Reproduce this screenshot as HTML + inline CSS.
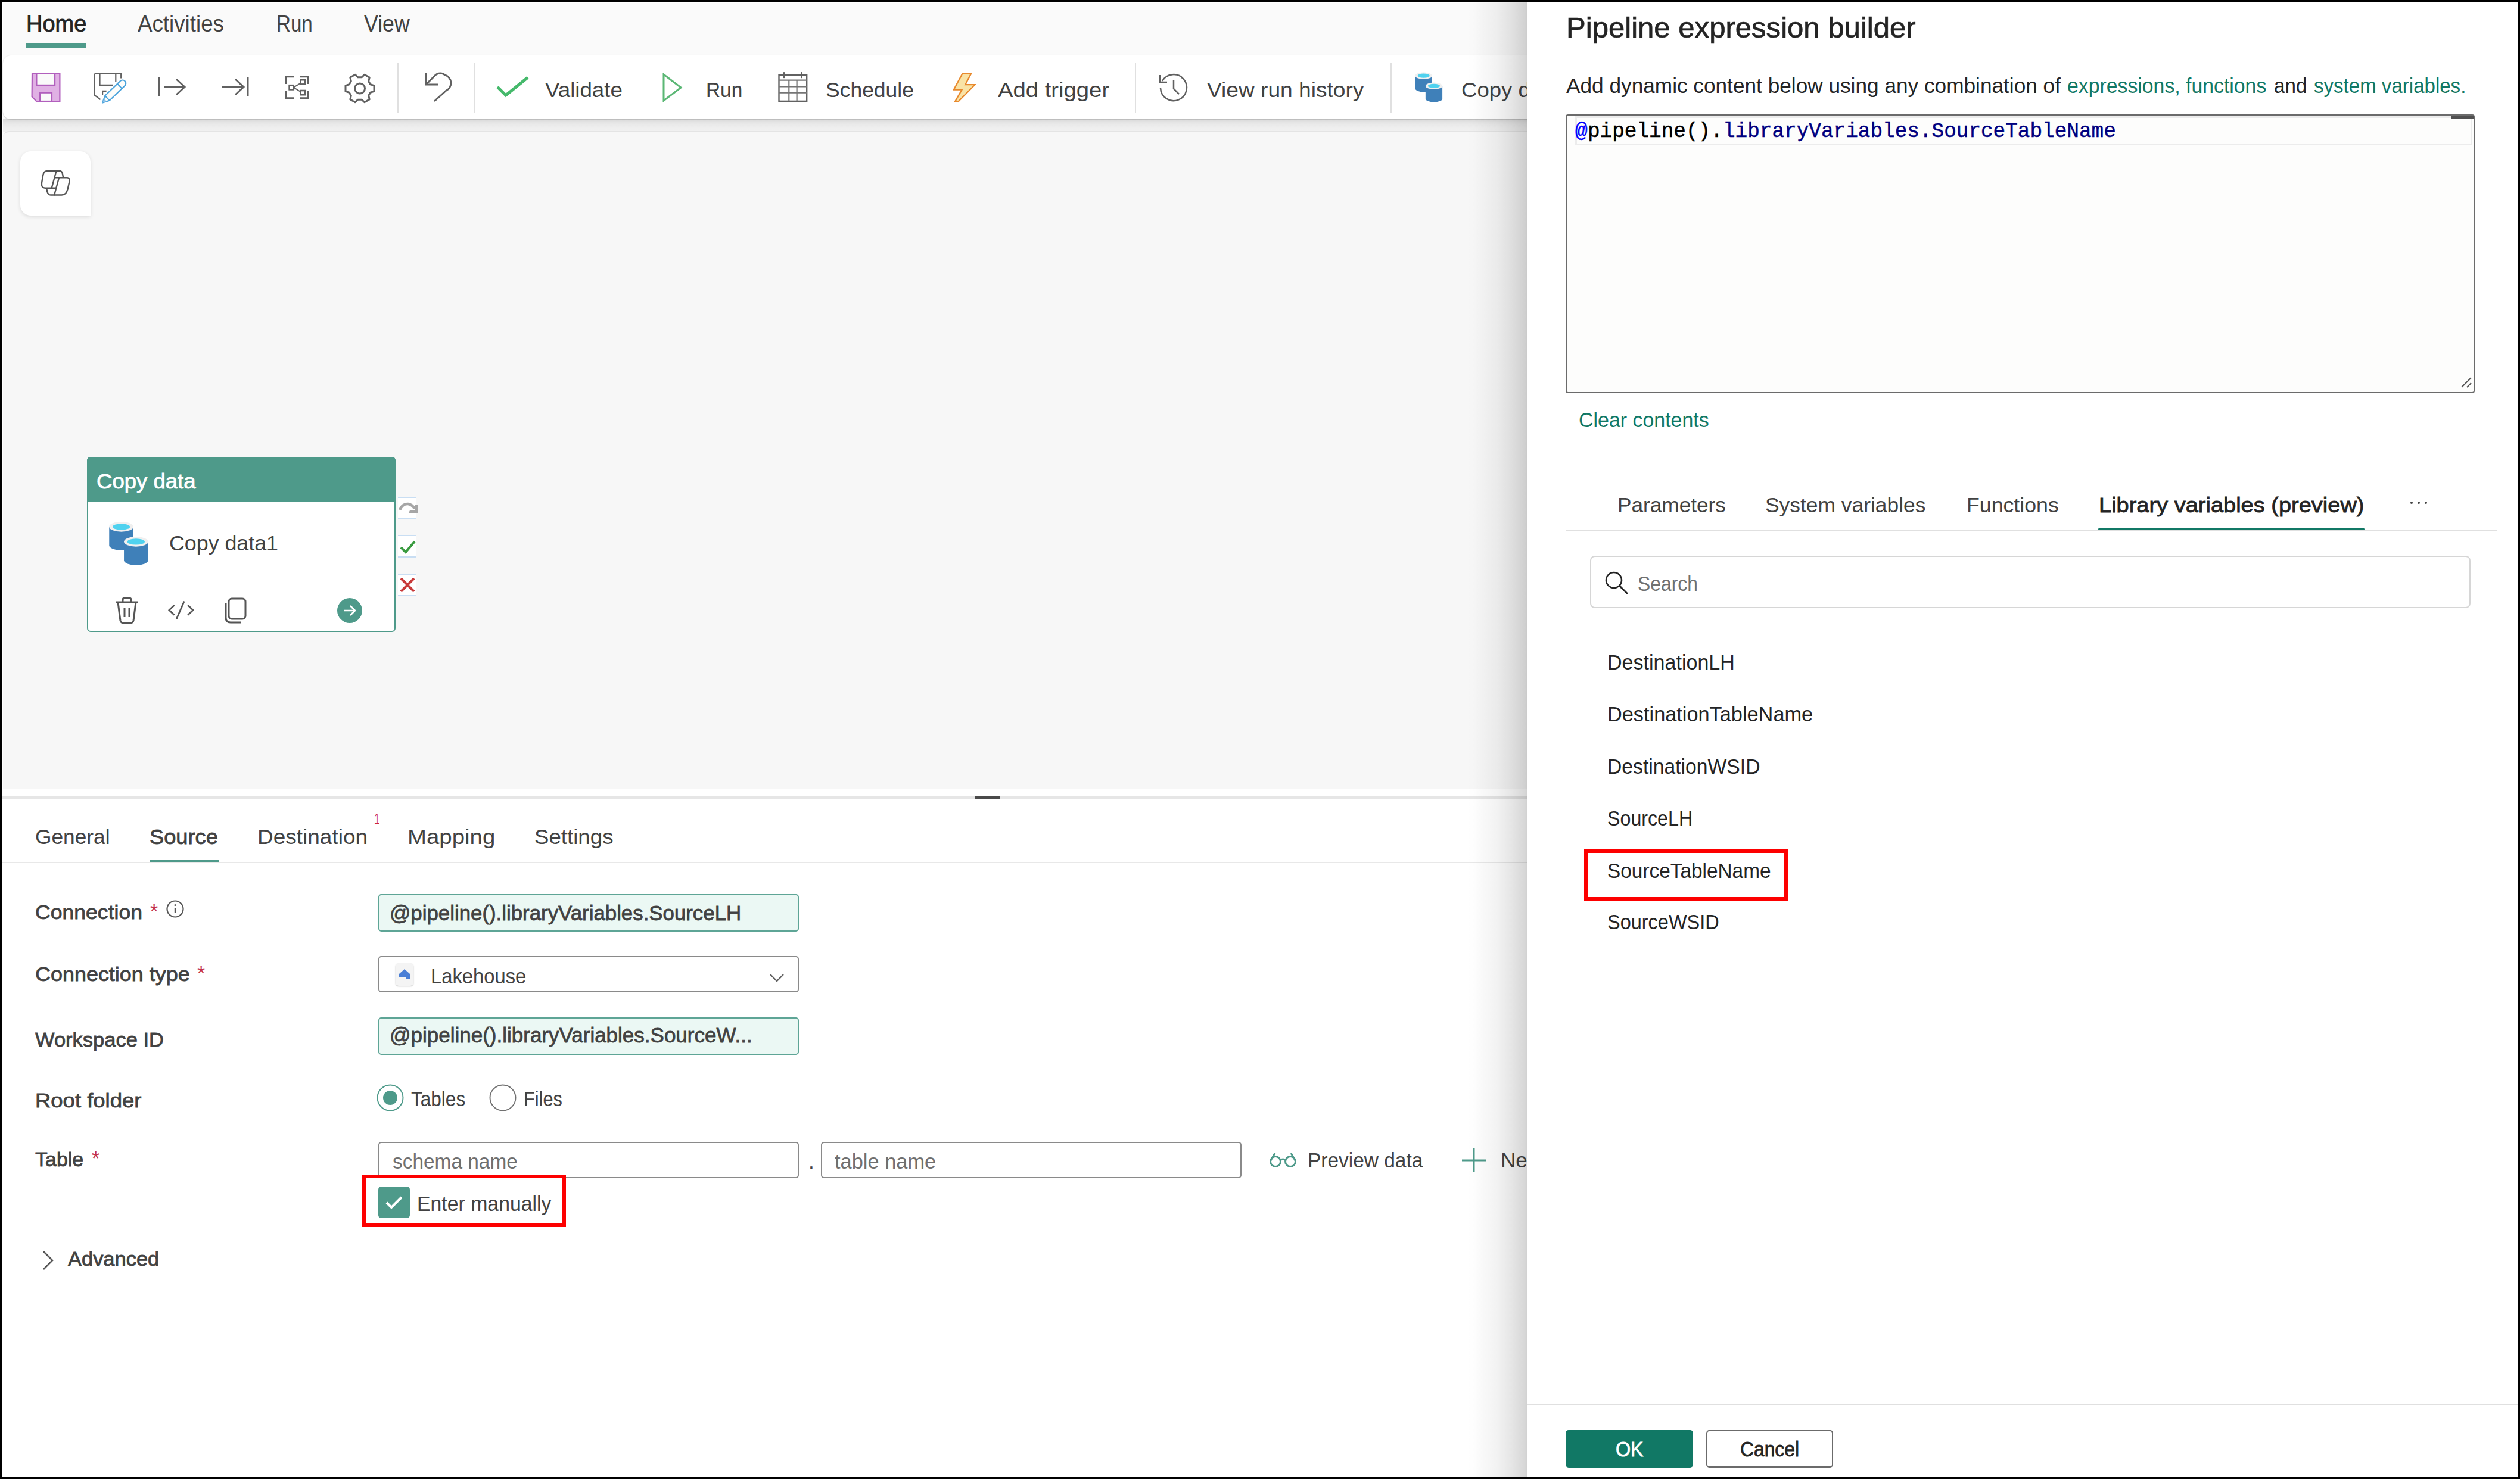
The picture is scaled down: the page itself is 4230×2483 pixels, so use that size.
<!DOCTYPE html>
<html><head><meta charset="utf-8"><title>Pipeline expression builder</title>
<style>
html,body{margin:0;padding:0;}
body{width:4230px;height:2483px;background:#000;position:relative;overflow:hidden;font-family:"Liberation Sans",sans-serif;}
.t{position:absolute;white-space:nowrap;}
.r{position:absolute;}
</style></head><body>
<div class="r" style="left:4px;top:4px;width:2560px;height:260px;background:#fafafa;"></div>
<div class="r" style="left:4px;top:4px;width:2560px;height:1px;background:#ffffff;"></div>
<div class="r" style="left:4px;top:4px;width:1px;height:2475px;background:#ffffff;"></div>
<div class="t" style="left:44.0px;top:21.4px;font-size:38px;line-height:38px;font-weight:400;color:#242424;font-family:'Liberation Sans', sans-serif;-webkit-text-stroke:0.8px #242424;">Home</div>
<div class="r" style="left:44px;top:72px;width:101px;height:8px;background:#4e9a8a;"></div>
<div class="t" style="left:231.0px;top:21.4px;font-size:38px;line-height:38px;font-weight:400;color:#424242;font-family:'Liberation Sans', sans-serif;transform:scaleX(0.9667);transform-origin:0 0;">Activities</div>
<div class="t" style="left:464.0px;top:21.4px;font-size:38px;line-height:38px;font-weight:400;color:#424242;font-family:'Liberation Sans', sans-serif;transform:scaleX(0.8714);transform-origin:0 0;">Run</div>
<div class="t" style="left:611.0px;top:21.4px;font-size:38px;line-height:38px;font-weight:400;color:#424242;font-family:'Liberation Sans', sans-serif;transform:scaleX(0.9390);transform-origin:0 0;">View</div>
<div class="r" style="left:5px;top:200px;width:2600px;height:21px;background:linear-gradient(#d8d8d8 0%, #e3e3e3 20%, #eaeaea 45%, #efefef 75%, #f0f0f0 100%);"></div>
<div class="r" style="left:5px;top:93px;width:2600px;height:107px;background:#ffffff;border-radius:13px;box-shadow:0 1px 2px rgba(0,0,0,0.14),0 0 2px rgba(0,0,0,0.10);"></div>
<div class="r" style="left:5px;top:220px;width:2600px;height:1105px;background:#f7f7f7;border-top-left-radius:10px;border-top:2px solid #e4e4e4;box-sizing:border-box;"></div>
<div class="r" style="left:667px;top:105px;width:2px;height:84px;background:#e0e0e0;"></div>
<div class="r" style="left:796px;top:105px;width:2px;height:84px;background:#e0e0e0;"></div>
<div class="r" style="left:1905px;top:105px;width:2px;height:84px;background:#e0e0e0;"></div>
<div class="r" style="left:2334px;top:105px;width:2px;height:84px;background:#e0e0e0;"></div>
<svg class="r" style="left:50px;top:120px;" width="54" height="52" viewBox="0 0 54 52"><path d="M4 3.6 H50.4 V50 H11 L3.6 42.3 Z" fill="#e0b1e4" stroke="#b15fbd" stroke-width="2.2" stroke-linejoin="miter"/><rect x="11.4" y="3.6" width="30.7" height="19.3" fill="#fafafa" stroke="#b15fbd" stroke-width="2.2"/><rect x="17" y="35.7" width="20" height="14.3" fill="#fafafa" stroke="#b15fbd" stroke-width="2.2"/></svg>
<svg class="r" style="left:156px;top:120px;" width="58" height="58" viewBox="0 0 58 58"><path d="M2.9 3.6 H47.2 V11.4 M2.9 3.6 V40 L12.6 47.1 M11.5 3.6 V22.9 H33.3 M38.3 3.6 V17 M16.1 40 V32.9 H22.6" fill="none" stroke="#616161" stroke-width="2.2"/><path d="M16.1 52.5 L20.2 40.8 L45.9 16 A5.5 5.5 0 0 1 53.5 24 L27.8 48.8 Z" fill="#fdfdfa" stroke="#4aa3dc" stroke-width="2.2" stroke-linejoin="round"/><path d="M20.2 40.8 L27.8 48.8 M41.1 20.7 L48.7 28.7" stroke="#4aa3dc" stroke-width="2"/><path d="M16.1 52.5 L18.5 45.5 L23 50 Z" fill="#8fc4ea"/></svg>
<svg class="r" style="left:262px;top:128px;" width="52" height="36" viewBox="0 0 52 36"><path d="M5 2 V34 M13 18 H48 M34 5 L48 18 L34 31" fill="none" stroke="#616161" stroke-width="3"/></svg>
<svg class="r" style="left:369px;top:128px;" width="52" height="36" viewBox="0 0 52 36"><path d="M3 18 H40 M26 5 L40 18 L26 31 M47 2 V34" fill="none" stroke="#616161" stroke-width="3"/></svg>
<svg class="r" style="left:476px;top:124px;" width="46" height="46" viewBox="0 0 46 46"><g fill="none" stroke="#616161" stroke-width="2.6"><path d="M3.7 17.1 V5 H17.7 M27.8 5 H41.1 V17.1 M3.7 27.9 V40.6 H17.7 M27.8 40.6 H41.1 V27.9"/><rect x="9.6" y="19.2" width="7.2" height="7.2"/><rect x="28.6" y="10.2" width="7.2" height="7.2"/><rect x="28.6" y="28" width="7.2" height="7.2"/></g><path d="M16.8 22.8 L28.6 15.5 M16.8 22.8 L28.6 30" stroke="#616161" stroke-width="2"/></svg>

<svg class="r" style="left:575px;top:120px;" width="58" height="58" viewBox="0 0 58 58"><path d="M46.8 21.8 L53.0 23.6 L53.0 33.4 L46.8 35.2 L43.7 40.6 L45.2 46.9 L36.8 51.7 L32.1 47.2 L25.9 47.2 L21.2 51.7 L12.8 46.9 L14.3 40.6 L11.2 35.2 L5.0 33.4 L5.0 23.6 L11.2 21.8 L14.3 16.4 L12.8 10.1 L21.2 5.3 L25.9 9.8 L32.1 9.8 L36.8 5.3 L45.2 10.1 L43.7 16.4 Z" fill="none" stroke="#616161" stroke-width="3" stroke-linejoin="round"/><circle cx="29" cy="28.5" r="8.5" fill="none" stroke="#616161" stroke-width="3"/></svg>
<svg class="r" style="left:709px;top:120px;" width="50" height="52" viewBox="0 0 50 52"><path d="M6 2 V22 H26 M6 22 L22 6 A12 12 0 0 1 38 6 A14 14 0 0 1 40 32 L20 50" fill="none" stroke="#616161" stroke-width="3"/></svg>
<svg class="r" style="left:832px;top:127px;" width="58" height="42" viewBox="0 0 58 42"><path d="M3 19 L17 33 L54 3" fill="none" stroke="#45b96b" stroke-width="5"/></svg>
<div class="t" style="left:915.0px;top:132.8px;font-size:35px;line-height:35px;font-weight:400;color:#424242;font-family:'Liberation Sans', sans-serif;transform:scaleX(1.0484);transform-origin:0 0;">Validate</div>
<svg class="r" style="left:1111px;top:122px;" width="36" height="50" viewBox="0 0 36 50"><path d="M3 3 L32 25 L3 47 Z" fill="none" stroke="#5bb775" stroke-width="3"/></svg>
<div class="t" style="left:1185.0px;top:132.8px;font-size:35px;line-height:35px;font-weight:400;color:#424242;font-family:'Liberation Sans', sans-serif;transform:scaleX(0.9531);transform-origin:0 0;">Run</div>
<svg class="r" style="left:1304px;top:121px;" width="54" height="52" viewBox="0 0 54 52"><rect x="3.5" y="5.1" width="46.7" height="43.8" fill="none" stroke="#616161" stroke-width="2.4"/><path d="M3.5 13.6 H50.2 M3.5 24.3 H50.2 M3.5 34.7 H50.2 M20.3 13.6 V48.9 M33.6 13.6 V48.9" stroke="#757575" stroke-width="2.2"/><path d="M12 1.3 V8.9 M41.6 1.3 V8.9" stroke="#616161" stroke-width="2.6" stroke-linecap="round"/></svg>
<div class="t" style="left:1386.0px;top:132.8px;font-size:35px;line-height:35px;font-weight:400;color:#424242;font-family:'Liberation Sans', sans-serif;transform:scaleX(1.0137);transform-origin:0 0;">Schedule</div>
<svg class="r" style="left:1597px;top:120px;" width="42" height="52" viewBox="0 0 42 52"><path d="M18.6 3.3 H33.2 L23.3 22.2 H39.4 L11.9 50.1 H6.3 L17.6 30.7 H3.9 Z" fill="#f9e3a6" stroke="#e88a2e" stroke-width="2.3" stroke-linejoin="miter"/></svg>
<div class="t" style="left:1675.0px;top:132.8px;font-size:35px;line-height:35px;font-weight:400;color:#424242;font-family:'Liberation Sans', sans-serif;transform:scaleX(1.0930);transform-origin:0 0;">Add trigger</div>
<svg class="r" style="left:1943px;top:121px;" width="54" height="54" viewBox="0 0 54 54"><path d="M8 15 A22 22 0 1 1 5 27" fill="none" stroke="#616161" stroke-width="2.5"/><path d="M4 5 V17 H16" fill="none" stroke="#616161" stroke-width="2.5"/><path d="M27 14 V28 L36 37" fill="none" stroke="#616161" stroke-width="2.5"/></svg>
<div class="t" style="left:2026.0px;top:132.8px;font-size:35px;line-height:35px;font-weight:400;color:#424242;font-family:'Liberation Sans', sans-serif;transform:scaleX(1.0602);transform-origin:0 0;">View run history</div>
<svg class="r" style="left:2374.4px;top:119.6px" width="48.7" height="52.9" viewBox="0 0 62 74" preserveAspectRatio="none"><ellipse cx="20" cy="10" rx="18" ry="8" fill="#e8f3fa"/><path d="M2 10 V40 A18 8 0 0 0 38 40 V10 Z" fill="#3f80b9"/><ellipse cx="20" cy="10" rx="18" ry="8" fill="#f0f0f0"/><ellipse cx="20" cy="10" rx="13" ry="5" fill="#50d2ef"/><path d="M24 34 V64 A18 8 0 0 0 60 64 V34 Z" fill="#3f80b9"/><ellipse cx="42" cy="34" rx="18" ry="8" fill="#f0f0f0"/><ellipse cx="42" cy="34" rx="13" ry="5" fill="#50d2ef"/></svg>
<div class="t" style="left:2453.0px;top:132.8px;font-size:35px;line-height:35px;font-weight:400;color:#424242;font-family:'Liberation Sans', sans-serif;transform:scaleX(1.045);transform-origin:0 0;">Copy data</div>
<div class="r" style="left:34px;top:254px;width:118px;height:108px;background:#ffffff;border-radius:18px 18px 0 18px;box-shadow:0 2px 6px rgba(0,0,0,0.12);"></div>
<svg class="r" style="left:68px;top:285px;" width="51" height="45" viewBox="0 0 51 45"><g transform="translate(1,1)" fill="none" stroke="#555" stroke-width="2.4" stroke-linejoin="round" stroke-linecap="round"><path d="M10.5 1 H31 Q35 1 36 6 L37 11.8"/><path d="M10.5 1 Q5 1 3.5 7 L1 21 Q0 29.5 6.5 29.8 H25"/><path d="M25.5 1 L17.8 29.5"/><path d="M23.3 12.2 H44 Q48.5 12.8 47.5 19 L44.5 32 Q42 41.5 34.5 41.5 H16 Q12 41.5 10.5 36.5 L9 30.3"/><path d="M29.8 13.3 L22.2 41.3"/></g></svg>
<div class="r" style="left:146px;top:767px;width:518px;height:294px;background:#ffffff;border:2.5px solid #4e9a8a;border-radius:6px;box-sizing:border-box;"></div>
<div class="r" style="left:146px;top:767px;width:518px;height:75px;background:#4e9a8a;border-radius:6px 6px 0 0;"></div>
<div class="t" style="left:162.0px;top:790.4px;font-size:35px;line-height:35px;font-weight:400;color:#ffffff;font-family:'Liberation Sans', sans-serif;transform:scaleX(1.0437);transform-origin:0 0;-webkit-text-stroke:0.8px #ffffff;">Copy data</div>
<svg class="r" style="left:181.3px;top:873.9px" width="69.9" height="77" viewBox="0 0 62 74" preserveAspectRatio="none"><ellipse cx="20" cy="10" rx="18" ry="8" fill="#e8f3fa"/><path d="M2 10 V40 A18 8 0 0 0 38 40 V10 Z" fill="#3f80b9"/><ellipse cx="20" cy="10" rx="18" ry="8" fill="#f0f0f0"/><ellipse cx="20" cy="10" rx="13" ry="5" fill="#50d2ef"/><path d="M24 34 V64 A18 8 0 0 0 60 64 V34 Z" fill="#3f80b9"/><ellipse cx="42" cy="34" rx="18" ry="8" fill="#f0f0f0"/><ellipse cx="42" cy="34" rx="13" ry="5" fill="#50d2ef"/></svg>
<div class="t" style="left:284.0px;top:894.2px;font-size:35px;line-height:35px;font-weight:400;color:#424242;font-family:'Liberation Sans', sans-serif;transform:scaleX(1.0223);transform-origin:0 0;">Copy data1</div>
<svg class="r" style="left:190px;top:1002px;" width="46" height="46" viewBox="0 0 46 46"><path d="M4 9 H42 M16 9 V5 Q16 2 19 2 H27 Q30 2 30 5 V9 M8 9 L12 40 Q13 44 17 44 H29 Q33 44 34 40 L38 9 M19 18 V34 M27 18 V34" fill="none" stroke="#555" stroke-width="3"/></svg>
<svg class="r" style="left:280px;top:1006px;" width="48" height="40" viewBox="0 0 48 40"><path d="M12.6 10 L3.9 18.2 L12.6 26.5 M35.3 10 L44 18.2 L35.3 26.5 M29.2 3.5 L16.1 33.5" fill="none" stroke="#555" stroke-width="2.7"/></svg>
<svg class="r" style="left:374px;top:1003px;" width="42" height="44" viewBox="0 0 42 44"><rect x="10" y="2" width="28" height="34" rx="5" fill="none" stroke="#555" stroke-width="3"/><path d="M5 9 V34 Q5 42 13 42 H30" fill="none" stroke="#555" stroke-width="3"/></svg>
<svg class="r" style="left:565px;top:1003px;" width="44" height="44" viewBox="0 0 44 44"><circle cx="22" cy="22" r="21" fill="#4e9a8a"/><path d="M12 22 H31 M23 14 L31 22 L23 30" fill="none" stroke="#fff" stroke-width="2.6"/></svg>
<div class="r" style="left:668px;top:834px;width:31px;height:38px;background:#fff;border-top:2px solid #c9def3;border-bottom:2px solid #c9def3;box-sizing:border-box;"></div>
<svg class="r" style="left:668px;top:840px;" width="33" height="28" viewBox="0 0 33 28"><path d="M3 16 Q8 5 17 6 Q24 7 28 14" fill="none" stroke="#a6a6a6" stroke-width="4.5"/><path d="M33 7 V21 H18 L20 17 H29 V7 Z" fill="#a6a6a6"/></svg>
<div class="r" style="left:668px;top:898px;width:31px;height:38px;background:#fff;border-top:2px solid #c9def3;border-bottom:2px solid #c9def3;box-sizing:border-box;"></div>
<svg class="r" style="left:670px;top:905px;" width="28" height="26" viewBox="0 0 28 26"><path d="M3 14 L11 22 L26 4" fill="none" stroke="#3a9b40" stroke-width="4"/></svg>
<div class="r" style="left:668px;top:963px;width:31px;height:38px;background:#fff;border-top:2px solid #c9def3;border-bottom:2px solid #c9def3;box-sizing:border-box;"></div>
<svg class="r" style="left:670px;top:968px;" width="28" height="28" viewBox="0 0 28 28"><path d="M3 3 L25 25 M25 3 L3 25" fill="none" stroke="#c83a3a" stroke-width="4"/></svg>
<div class="r" style="left:4px;top:1325px;width:2560px;height:1154px;background:#ffffff;"></div>
<div class="r" style="left:4px;top:1336px;width:2560px;height:6px;background:#e6e6e6;"></div>
<div class="r" style="left:1636px;top:1336px;width:43px;height:6px;background:#4a4a4a;border-radius:1px;"></div>
<div class="t" style="left:59.0px;top:1387.4px;font-size:35px;line-height:35px;font-weight:400;color:#424242;font-family:'Liberation Sans', sans-serif;transform:scaleX(1.0080);transform-origin:0 0;">General</div>
<div class="t" style="left:251.0px;top:1386.9px;font-size:35px;line-height:35px;font-weight:400;color:#424242;font-family:'Liberation Sans', sans-serif;transform:scaleX(1.0360);transform-origin:0 0;-webkit-text-stroke:0.8px #424242;">Source</div>
<div class="r" style="left:251px;top:1443px;width:116px;height:6px;background:#4e9a8a;"></div>
<div class="t" style="left:432.0px;top:1387.4px;font-size:35px;line-height:35px;font-weight:400;color:#424242;font-family:'Liberation Sans', sans-serif;transform:scaleX(1.0571);transform-origin:0 0;">Destination</div>
<div class="t" style="left:628.0px;top:1362.2px;font-size:26px;line-height:26px;font-weight:400;color:#d0273e;font-family:'Liberation Sans', sans-serif;transform:scaleX(0.6429);transform-origin:0 0;">1</div>
<div class="t" style="left:684.0px;top:1387.4px;font-size:35px;line-height:35px;font-weight:400;color:#424242;font-family:'Liberation Sans', sans-serif;transform:scaleX(1.0970);transform-origin:0 0;">Mapping</div>
<div class="t" style="left:897.0px;top:1387.4px;font-size:35px;line-height:35px;font-weight:400;color:#424242;font-family:'Liberation Sans', sans-serif;transform:scaleX(1.0476);transform-origin:0 0;">Settings</div>
<div class="r" style="left:4px;top:1447px;width:2560px;height:2px;background:#e8e8e8;"></div>
<div class="t" style="left:59.0px;top:1514.2px;font-size:34px;line-height:34px;font-weight:400;color:#424242;font-family:'Liberation Sans', sans-serif;transform:scaleX(1.0465);transform-origin:0 0;-webkit-text-stroke:0.8px #424242;">Connection</div>
<div class="t" style="left:252.0px;top:1512.2px;font-size:34px;line-height:34px;font-weight:400;color:#c4314b;font-family:'Liberation Sans', sans-serif;">*</div>
<svg class="r" style="left:278px;top:1510px;" width="32" height="32" viewBox="0 0 32 32"><circle cx="16" cy="16" r="13.5" fill="none" stroke="#555" stroke-width="2.2"/><path d="M16 14 V23" stroke="#555" stroke-width="2.4"/><circle cx="16" cy="9.5" r="1.6" fill="#555"/></svg>
<div class="t" style="left:59.0px;top:1618.2px;font-size:34px;line-height:34px;font-weight:400;color:#424242;font-family:'Liberation Sans', sans-serif;transform:scaleX(1.0569);transform-origin:0 0;-webkit-text-stroke:0.8px #424242;">Connection type</div>
<div class="t" style="left:331.0px;top:1616.2px;font-size:34px;line-height:34px;font-weight:400;color:#c4314b;font-family:'Liberation Sans', sans-serif;">*</div>
<div class="t" style="left:59.0px;top:1727.9px;font-size:34px;line-height:34px;font-weight:400;color:#424242;font-family:'Liberation Sans', sans-serif;transform:scaleX(1.0141);transform-origin:0 0;-webkit-text-stroke:0.8px #424242;">Workspace ID</div>
<div class="t" style="left:59.0px;top:1829.9px;font-size:34px;line-height:34px;font-weight:400;color:#424242;font-family:'Liberation Sans', sans-serif;transform:scaleX(1.0723);transform-origin:0 0;-webkit-text-stroke:0.8px #424242;">Root folder</div>
<div class="t" style="left:59.0px;top:1929.2px;font-size:34px;line-height:34px;font-weight:400;color:#424242;font-family:'Liberation Sans', sans-serif;-webkit-text-stroke:0.8px #424242;">Table</div>
<div class="t" style="left:154.0px;top:1927.2px;font-size:34px;line-height:34px;font-weight:400;color:#c4314b;font-family:'Liberation Sans', sans-serif;">*</div>
<div class="r" style="left:635px;top:1501px;width:706px;height:63px;background:#ebf8f4;border:2px solid #5ea596;border-radius:5px;box-sizing:border-box;"></div>
<div class="t" style="left:654.0px;top:1515.4px;font-size:35px;line-height:35px;font-weight:400;color:#424242;font-family:'Liberation Sans', sans-serif;transform:scaleX(0.9949);transform-origin:0 0;-webkit-text-stroke:0.8px #424242;">@pipeline().libraryVariables.SourceLH</div>
<div class="r" style="left:635px;top:1605px;width:706px;height:61px;background:#fff;border:2px solid #8a8a8a;border-radius:5px;box-sizing:border-box;"></div>
<div class="r" style="left:664px;top:1617px;width:30px;height:38px;background:#f4f4f4;border-radius:5px;box-shadow:0 1px 2px rgba(0,0,0,0.25);"></div>
<svg class="r" style="left:668px;top:1624px;" width="22" height="24" viewBox="0 0 22 24"><path d="M2 11 L11 3 L20 11 V20 H13 V17 H2 Z" fill="#4a7fd6"/></svg>
<div class="t" style="left:723.0px;top:1620.9px;font-size:35px;line-height:35px;font-weight:400;color:#424242;font-family:'Liberation Sans', sans-serif;transform:scaleX(0.9357);transform-origin:0 0;">Lakehouse</div>
<svg class="r" style="left:1290px;top:1633px;" width="28" height="18" viewBox="0 0 28 18"><path d="M3 3 L14 14 L25 3" fill="none" stroke="#616161" stroke-width="2.4"/></svg>
<div class="r" style="left:635px;top:1708px;width:706px;height:63px;background:#ebf8f4;border:2px solid #5ea596;border-radius:5px;box-sizing:border-box;"></div>
<div class="t" style="left:654.0px;top:1720.4px;font-size:35px;line-height:35px;font-weight:400;color:#424242;font-family:'Liberation Sans', sans-serif;-webkit-text-stroke:0.8px #424242;">@pipeline().libraryVariables.SourceW...</div>
<svg class="r" style="left:631px;top:1819px;" width="48" height="48" viewBox="0 0 48 48"><circle cx="24" cy="24" r="21.5" fill="#fff" stroke="#4e9a8a" stroke-width="2"/><circle cx="24" cy="24" r="12" fill="#4e9a8a"/></svg>
<div class="t" style="left:690.0px;top:1827.4px;font-size:35px;line-height:35px;font-weight:400;color:#424242;font-family:'Liberation Sans', sans-serif;transform:scaleX(0.9010);transform-origin:0 0;">Tables</div>
<svg class="r" style="left:820px;top:1819px;" width="48" height="48" viewBox="0 0 48 48"><circle cx="24" cy="24" r="21.5" fill="#fff" stroke="#707070" stroke-width="1.9"/></svg>
<div class="t" style="left:879.0px;top:1827.4px;font-size:35px;line-height:35px;font-weight:400;color:#424242;font-family:'Liberation Sans', sans-serif;transform:scaleX(0.8784);transform-origin:0 0;">Files</div>
<div class="r" style="left:635px;top:1917px;width:706px;height:61px;background:#fff;border:2px solid #8a8a8a;border-radius:5px;box-sizing:border-box;"></div>
<div class="t" style="left:659.0px;top:1932.4px;font-size:35px;line-height:35px;font-weight:400;color:#707070;font-family:'Liberation Sans', sans-serif;transform:scaleX(0.9545);transform-origin:0 0;">schema name</div>
<div class="t" style="left:1357.0px;top:1932.4px;font-size:35px;line-height:35px;font-weight:400;color:#424242;font-family:'Liberation Sans', sans-serif;">.</div>
<div class="r" style="left:1378px;top:1917px;width:706px;height:61px;background:#fff;border:2px solid #8a8a8a;border-radius:5px;box-sizing:border-box;"></div>
<div class="t" style="left:1401.0px;top:1932.4px;font-size:35px;line-height:35px;font-weight:400;color:#707070;font-family:'Liberation Sans', sans-serif;transform:scaleX(0.9827);transform-origin:0 0;">table name</div>
<svg class="r" style="left:2130px;top:1930px;" width="48" height="32" viewBox="0 0 48 32"><circle cx="11" cy="20" r="8.5" fill="none" stroke="#4e9a8a" stroke-width="3"/><circle cx="36" cy="20" r="8.5" fill="none" stroke="#4e9a8a" stroke-width="3"/><path d="M19 18 Q23.5 14 28 18 M3 18 L10 6 M44 18 L37 6" fill="none" stroke="#4e9a8a" stroke-width="3"/></svg>
<div class="t" style="left:2195.0px;top:1930.4px;font-size:35px;line-height:35px;font-weight:400;color:#424242;font-family:'Liberation Sans', sans-serif;transform:scaleX(0.9557);transform-origin:0 0;">Preview data</div>
<svg class="r" style="left:2452px;top:1926px;" width="44" height="44" viewBox="0 0 44 44"><path d="M22 2 V42 M2 22 H42" stroke="#4e9a8a" stroke-width="3"/></svg>
<div class="t" style="left:2519.0px;top:1930.4px;font-size:35px;line-height:35px;font-weight:400;color:#424242;font-family:'Liberation Sans', sans-serif;">New</div>
<div class="r" style="left:635px;top:1992px;width:53px;height:53px;background:#4e9a8a;border-radius:5px;"></div>
<svg class="r" style="left:635px;top:1992px;" width="53" height="53" viewBox="0 0 53 53"><path d="M14 27 L22 35 L39 18" fill="none" stroke="#fff" stroke-width="4"/></svg>
<div class="t" style="left:700.0px;top:2003.4px;font-size:35px;line-height:35px;font-weight:400;color:#424242;font-family:'Liberation Sans', sans-serif;transform:scaleX(0.9658);transform-origin:0 0;">Enter manually</div>
<div class="r" style="left:608px;top:1972px;width:342px;height:88px;border:6px solid #fd0000;box-sizing:border-box;"></div>
<svg class="r" style="left:68px;top:2098px;" width="26" height="36" viewBox="0 0 26 36"><path d="M5 3 L20 18 L5 33" fill="none" stroke="#555" stroke-width="2.6"/></svg>
<div class="t" style="left:114.0px;top:2095.8px;font-size:34px;line-height:34px;font-weight:400;color:#424242;font-family:'Liberation Sans', sans-serif;transform:scaleX(1.0132);transform-origin:0 0;-webkit-text-stroke:0.8px #424242;">Advanced</div>
<div class="r" style="left:2463px;top:4px;width:100px;height:2475px;background:linear-gradient(to right, rgba(0,0,0,0) 0%, rgba(0,0,0,0.008) 12%, rgba(0,0,0,0.024) 25%, rgba(0,0,0,0.05) 50%, rgba(0,0,0,0.10) 75%, rgba(0,0,0,0.16) 97%, rgba(0,0,0,0.18) 100%);"></div>
<div class="r" style="left:2563px;top:4px;width:1663px;height:2475px;background:#ffffff;"></div>
<div class="t" style="left:2629.0px;top:23.4px;font-size:48px;line-height:48px;font-weight:400;color:#242424;font-family:'Liberation Sans', sans-serif;transform:scaleX(1.0226);transform-origin:0 0;-webkit-text-stroke:0.7px #242424;">Pipeline expression builder</div>

<div class="t" style="left:2629.0px;top:126.4px;font-size:35px;line-height:35px;font-weight:400;color:#242424;font-family:'Liberation Sans', sans-serif;transform:scaleX(1.0061);transform-origin:0 0;">Add dynamic content below using any combination of</div>
<div class="t" style="left:3470.0px;top:126.4px;font-size:35px;line-height:35px;font-weight:400;color:#117865;font-family:'Liberation Sans', sans-serif;transform:scaleX(0.9653);transform-origin:0 0;">expressions, functions</div>
<div class="t" style="left:3817.0px;top:126.4px;font-size:35px;line-height:35px;font-weight:400;color:#242424;font-family:'Liberation Sans', sans-serif;transform:scaleX(0.9483);transform-origin:0 0;">and</div>
<div class="t" style="left:3884.0px;top:126.4px;font-size:35px;line-height:35px;font-weight:400;color:#117865;font-family:'Liberation Sans', sans-serif;transform:scaleX(0.9444);transform-origin:0 0;">system variables.</div>
<div class="r" style="left:2628px;top:192px;width:1526px;height:468px;background:#fdfdfc;border:2px solid #6b6b6b;border-radius:4px;box-sizing:border-box;"></div>
<div class="r" style="left:2644px;top:195px;width:1506px;height:49px;border:3px solid #ececec;box-sizing:border-box;"></div>
<div class="r" style="left:4114px;top:194px;width:1px;height:464px;background:#dcdcdc;"></div>
<div class="r" style="left:4115px;top:194px;width:37px;height:6px;background:#505050;"></div>
<svg class="r" style="left:4128px;top:630px;" width="22" height="22" viewBox="0 0 22 22"><path d="M20 4 L4 20 M20 13 L13 20" stroke="#555" stroke-width="2.2"/></svg>
<div class="t" style="left:2644.0px;top:204.2px;font-size:34.37px;line-height:34.37px;font-weight:400;color:#0000ff;font-family:'Liberation Mono', monospace;-webkit-text-stroke:0.5px #0000ff;">@</div>
<div class="t" style="left:2665.0px;top:204.2px;font-size:34.37px;line-height:34.37px;font-weight:400;color:#000000;font-family:'Liberation Mono', monospace;-webkit-text-stroke:0.5px #000;">pipeline().</div>
<div class="t" style="left:2892.0px;top:204.2px;font-size:34.37px;line-height:34.37px;font-weight:400;color:#000080;font-family:'Liberation Mono', monospace;-webkit-text-stroke:0.5px #000080;">libraryVariables.SourceTableName</div>
<div class="t" style="left:2650.0px;top:687.1px;font-size:35px;line-height:35px;font-weight:400;color:#117865;font-family:'Liberation Sans', sans-serif;transform:scaleX(0.9690);transform-origin:0 0;">Clear contents</div>
<div class="t" style="left:2715.0px;top:829.9px;font-size:35px;line-height:35px;font-weight:400;color:#424242;font-family:'Liberation Sans', sans-serif;transform:scaleX(1.0055);transform-origin:0 0;">Parameters</div>
<div class="t" style="left:2963.0px;top:829.9px;font-size:35px;line-height:35px;font-weight:400;color:#424242;font-family:'Liberation Sans', sans-serif;transform:scaleX(1.0112);transform-origin:0 0;">System variables</div>
<div class="t" style="left:3301.0px;top:829.9px;font-size:35px;line-height:35px;font-weight:400;color:#424242;font-family:'Liberation Sans', sans-serif;transform:scaleX(1.0197);transform-origin:0 0;">Functions</div>
<div class="t" style="left:3523.0px;top:829.9px;font-size:35px;line-height:35px;font-weight:400;color:#242424;font-family:'Liberation Sans', sans-serif;transform:scaleX(1.0854);transform-origin:0 0;-webkit-text-stroke:0.8px #242424;">Library variables (preview)</div>
<div class="r" style="left:3522px;top:886px;width:447px;height:6px;background:#117865;border-radius:3px;"></div>
<div class="r" style="left:2628px;top:890px;width:1563px;height:2px;background:#e0e0e0;"></div>
<div class="r" style="left:4046px;top:842px;width:4px;height:4px;background:#424242;border-radius:2px;"></div>
<div class="r" style="left:4058px;top:842px;width:4px;height:4px;background:#424242;border-radius:2px;"></div>
<div class="r" style="left:4070px;top:842px;width:4px;height:4px;background:#424242;border-radius:2px;"></div>
<div class="r" style="left:2669px;top:933px;width:1478px;height:88px;background:#fff;border:2px solid #d6d6d6;border-radius:8px;box-sizing:border-box;"></div>
<svg class="r" style="left:2692px;top:957px;" width="44" height="42" viewBox="0 0 44 42"><circle cx="17" cy="17" r="13" fill="none" stroke="#242424" stroke-width="2.6"/><path d="M26.5 26.5 L40 40" stroke="#242424" stroke-width="2.8"/></svg>
<div class="t" style="left:2749.0px;top:962.4px;font-size:35px;line-height:35px;font-weight:400;color:#707070;font-family:'Liberation Sans', sans-serif;transform:scaleX(0.9099);transform-origin:0 0;">Search</div>
<div class="t" style="left:2698.0px;top:1094.4px;font-size:35px;line-height:35px;font-weight:400;color:#242424;font-family:'Liberation Sans', sans-serif;transform:scaleX(0.9727);transform-origin:0 0;">DestinationLH</div>
<div class="t" style="left:2698.0px;top:1180.9px;font-size:35px;line-height:35px;font-weight:400;color:#242424;font-family:'Liberation Sans', sans-serif;transform:scaleX(0.9801);transform-origin:0 0;">DestinationTableName</div>
<div class="t" style="left:2698.0px;top:1269.4px;font-size:35px;line-height:35px;font-weight:400;color:#242424;font-family:'Liberation Sans', sans-serif;transform:scaleX(0.9625);transform-origin:0 0;">DestinationWSID</div>
<div class="t" style="left:2698.0px;top:1356.4px;font-size:35px;line-height:35px;font-weight:400;color:#242424;font-family:'Liberation Sans', sans-serif;transform:scaleX(0.9199);transform-origin:0 0;">SourceLH</div>
<div class="t" style="left:2698.0px;top:1444.2px;font-size:35px;line-height:35px;font-weight:400;color:#242424;font-family:'Liberation Sans', sans-serif;transform:scaleX(0.9535);transform-origin:0 0;">SourceTableName</div>
<div class="t" style="left:2698.0px;top:1530.4px;font-size:35px;line-height:35px;font-weight:400;color:#242424;font-family:'Liberation Sans', sans-serif;transform:scaleX(0.9277);transform-origin:0 0;">SourceWSID</div>
<div class="r" style="left:2659px;top:1425px;width:342px;height:88px;border:7px solid #fd0000;box-sizing:border-box;"></div>
<div class="r" style="left:2563px;top:2357px;width:1663px;height:2px;background:#e0e0e0;"></div>
<div class="r" style="left:2628px;top:2401px;width:214px;height:63px;background:#117865;border-radius:5px;"></div>
<div class="t" style="left:2712.0px;top:2414.8px;font-size:35px;line-height:35px;font-weight:400;color:#ffffff;font-family:'Liberation Sans', sans-serif;transform:scaleX(0.9216);transform-origin:0 0;-webkit-text-stroke:0.8px #ffffff;">OK</div>
<div class="r" style="left:2864px;top:2401px;width:213px;height:63px;background:#fff;border:2px solid #6b6b6b;border-radius:5px;box-sizing:border-box;"></div>
<div class="t" style="left:2921.0px;top:2414.8px;font-size:35px;line-height:35px;font-weight:400;color:#242424;font-family:'Liberation Sans', sans-serif;transform:scaleX(0.9083);transform-origin:0 0;-webkit-text-stroke:0.8px #242424;">Cancel</div>
</body></html>
